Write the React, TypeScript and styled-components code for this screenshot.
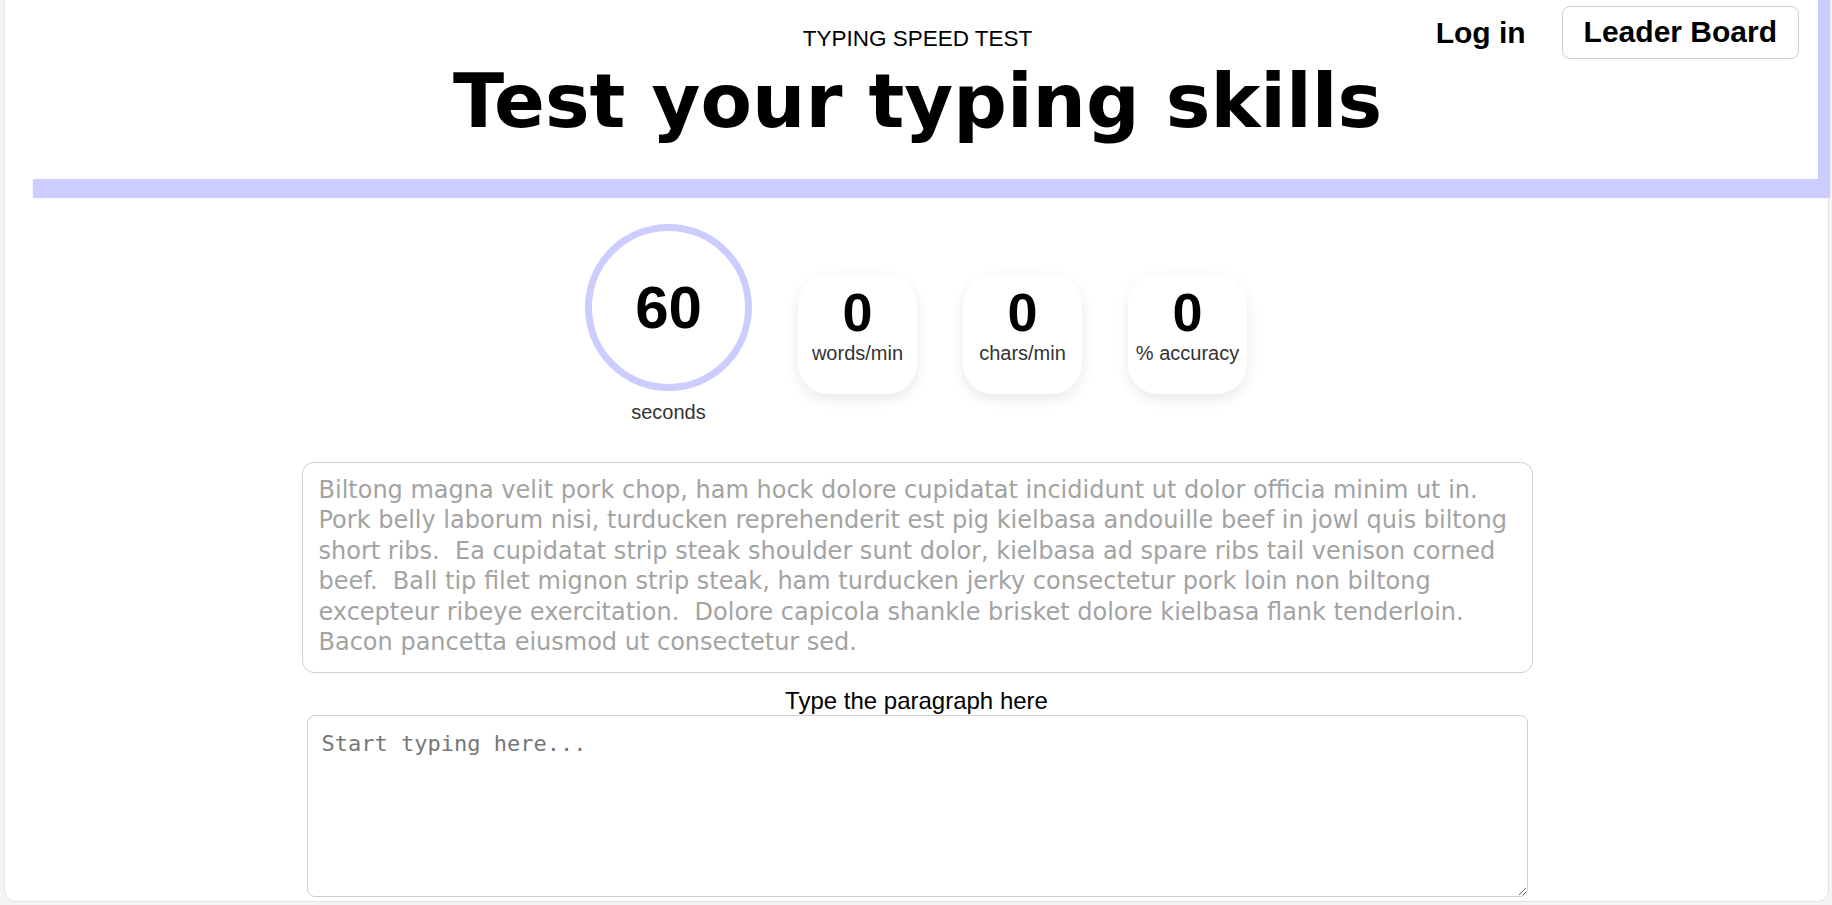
import React from "react";
import styled, { createGlobalStyle } from "styled-components";

const GlobalStyle = createGlobalStyle`
  html, body {
    margin: 0;
    padding: 0;
    background: #f4f4f4;
    overflow: hidden;
  }
  body {
    font-family: "Liberation Sans", Arial, sans-serif;
    color: #000;
  }
  * { box-sizing: border-box; }
`;

const Card = styled.div`
  margin: 0 3px 0 4px;
  height: 902px;
  background: #fff;
  border: 1px solid #e4e4e4;
  border-top: none;
  border-radius: 0 0 12px 12px;
  display: flex;
  flex-direction: column;
  align-items: center;
`;

const Header = styled.header`
  position: relative;
  align-self: stretch;
  margin: -20px 10px 0 16px;
  height: 199px;
  background: #fff;
  box-shadow: 12px 19px 1px #ccccff;
  display: flex;
  flex-direction: column;
  align-items: center;
  padding-top: 46px;
`;

const Kicker = styled.div`
  font-size: 22.5px;
  line-height: 26px;
  margin-left: -4px;
`;

const Title = styled.h1`
  margin: 6px 0 0 -4px;
  font-family: "DejaVu Sans", Verdana, sans-serif;
  font-weight: bold;
  font-size: 75px;
  line-height: 86px;
`;

const Nav = styled.nav`
  position: absolute;
  top: 26px;
  right: 19px;
  display: flex;
  align-items: center;
  gap: 36px;
`;

const LinkButton = styled.button`
  background: none;
  border: none;
  padding: 0;
  font-family: "Liberation Sans", Arial, sans-serif;
  font-weight: bold;
  font-size: 30px;
  color: #000;
  cursor: pointer;
`;

const OutlineButton = styled(LinkButton)`
  border: 1px solid #cfcfcf;
  border-radius: 8px;
  padding: 8px 21px 9px;
  background: #fff;
`;

const Stats = styled.section`
  display: flex;
  align-items: flex-start;
  gap: 46px;
  margin-top: 45px;
  margin-left: -1px;
`;

const TimerColumn = styled.div`
  display: flex;
  flex-direction: column;
  align-items: center;
  gap: 10px;
`;

const TimerRing = styled.div`
  width: 167px;
  height: 167px;
  border-radius: 50%;
  border: 7px solid #ccccff;
  display: flex;
  align-items: center;
  justify-content: center;
`;

const BigNumber = styled.div<{ $size: number }>`
  font-weight: bold;
  font-size: ${(p) => p.$size}px;
  line-height: 1;
`;

const StatLabel = styled.div`
  font-size: 20px;
  color: #333;
`;

const StatCard = styled.div`
  margin-top: 50px;
  width: 119px;
  height: 120px;
  border-radius: 30px;
  background: #fff;
  box-shadow: 0 5px 14px rgba(0, 0, 0, 0.09);
  display: flex;
  flex-direction: column;
  align-items: center;
  justify-content: center;
  gap: 3px;
  padding-bottom: 19px;
`;

const Paragraph = styled.p`
  margin: 38px 0 0 1px;
  width: 1231px;
  padding: 12px 16px 15px;
  border: 1px solid #cfcfcf;
  border-radius: 12px;
  font-family: "DejaVu Sans", Verdana, sans-serif;
  font-size: 24px;
  line-height: 30.4px;
  color: #a3a3a3;
  white-space: pre-wrap;
`;

const InputLabel = styled.label`
  margin-top: 14px;
  font-size: 24px;
  line-height: 27px;
`;

const TypingArea = styled.textarea`
  margin: 1px 0 0 1px;
  width: 1221px;
  height: 182px;
  padding: 15px 14px;
  border: 1px solid #cfcfcf;
  border-radius: 8px;
  font-family: "DejaVu Sans Mono", "Liberation Mono", monospace;
  font-size: 22px;
  line-height: 26px;
  resize: both;
  outline: none;
  &::placeholder {
    color: #777;
  }
`;

const PARAGRAPH =
  "Biltong magna velit pork chop, ham hock dolore cupidatat incididunt ut dolor officia minim ut in. Pork belly laborum nisi, turducken reprehenderit est pig kielbasa andouille beef in jowl quis biltong short ribs.  Ea cupidatat strip steak shoulder sunt dolor, kielbasa ad spare ribs tail venison corned beef.  Ball tip filet mignon strip steak, ham turducken jerky consectetur pork loin non biltong excepteur ribeye exercitation.  Dolore capicola shankle brisket dolore kielbasa flank tenderloin. Bacon pancetta eiusmod ut consectetur sed.";

const stats = [
  { value: 0, label: "words/min" },
  { value: 0, label: "chars/min" },
  { value: 0, label: "% accuracy" },
];

export default function App() {
  return (
    <>
      <GlobalStyle />
      <Card>
        <Header>
          <Kicker>TYPING SPEED TEST</Kicker>
          <Title>Test your typing skills</Title>
          <Nav>
            <LinkButton>Log in</LinkButton>
            <OutlineButton>Leader Board</OutlineButton>
          </Nav>
        </Header>
        <Stats>
          <TimerColumn>
            <TimerRing>
              <BigNumber $size={60}>60</BigNumber>
            </TimerRing>
            <StatLabel>seconds</StatLabel>
          </TimerColumn>
          {stats.map((s) => (
            <StatCard key={s.label}>
              <BigNumber $size={54}>{s.value}</BigNumber>
              <StatLabel>{s.label}</StatLabel>
            </StatCard>
          ))}
        </Stats>
        <Paragraph>{PARAGRAPH}</Paragraph>
        <InputLabel htmlFor="typing">Type the paragraph here</InputLabel>
        <TypingArea id="typing" placeholder="Start typing here..." />
      </Card>
    </>
  );
}
